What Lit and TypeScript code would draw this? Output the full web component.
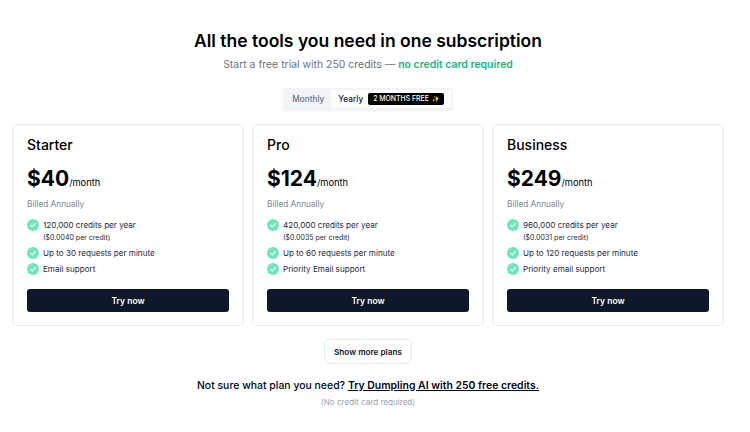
import { LitElement, html, css } from "lit";
import { customElement } from "lit/decorators.js";

const plans = [
  { name: "Starter", price: "$40", credits: "120,000 credits per year", per: "($0.0040 per credit)", rate: "Up to 30 requests per minute", support: "Email support" },
  { name: "Pro", price: "$124", credits: "420,000 credits per year", per: "($0.0035 per credit)", rate: "Up to 60 requests per minute", support: "Priority Email support" },
  { name: "Business", price: "$249", credits: "960,000 credits per year", per: "($0.0031 per credit)", rate: "Up to 120 requests per minute", support: "Priority email support" },
];

const check = html`<svg class="check" viewBox="0 0 20 20" width="12" height="12"><circle cx="10" cy="10" r="10" fill="#6ee7b7"/><path d="M5.8 10.4l2.9 2.8 5.5-5.9" fill="none" stroke="#fff" stroke-width="2" stroke-linecap="round" stroke-linejoin="round"/></svg>`;

@customElement("app-root")
export class AppRoot extends LitElement {
  static styles = css`
    :host { display: block; width: 750px; height: 432px; overflow: hidden; background: #fff; font-family: Inter, "Liberation Sans", sans-serif; color: #000; }
    .page { display: flex; flex-direction: column; align-items: center; padding: 29px 12px 0 12px; box-sizing: border-box; width: 736px; }
    h1 { margin: 0; font-size: 17.5px; line-height: 24px; font-weight: 600; }
    .sub { margin: 4px 0 0; font-size: 10.45px; line-height: 16px; color: #6b7280; }
    .sub b { color: #10b981; font-weight: 600; }
    .toggle { margin-top: 15px; display: flex; align-items: stretch; height: 22px; padding: 2px; border-radius: 3px; background: #f1f5f9; box-sizing: border-box; box-shadow: 0 1px 2px rgba(15,23,42,.06); }
    .tab { display: flex; align-items: center; font-size: 8.25px; font-weight: 500; }
    .monthly { color: #64748b; padding: 0 7px; }
    .yearly { background: #fff; border-radius: 2px; padding: 0 7px; gap: 5px; color: #0f172a; }
    .badge { background: #000; color: #fff; font-size: 6.9px; font-weight: 500; height: 12px; line-height: 12px; padding: 0 5px; border-radius: 2px; display: flex; align-items: center; gap: 3px; white-space: nowrap; }
    .spark { font-size: 6px; }
    .grid { margin-top: 14px; display: grid; grid-template-columns: repeat(3, 1fr); gap: 8px; align-self: stretch; box-sizing: border-box; width: 712px; }
    .card { border: 1px solid #e8edf4; border-radius: 5px; padding: 10px 14px 13px; box-sizing: border-box; height: 202px; display: flex; flex-direction: column; background: #fff; }
    .name { font-size: 14px; line-height: 20px; font-weight: 500; }
    .price { margin-top: 10px; display: flex; align-items: baseline; height: 28px; }
    .amount { font-size: 21px; line-height: 28px; font-weight: 700; }
    .unit { font-size: 9.3px; }
    .billed { margin-top: 5px; font-size: 8.25px; line-height: 12px; color: #7c8798; }
    ul { list-style: none; margin: 9px 0 0; padding: 0; display: flex; flex-direction: column; gap: 4px; }
    li { display: flex; gap: 4px; font-size: 8.1px; line-height: 12px; color: #1e293b; }
    .check { flex: none; }
    .per { display: block; font-size: 7px; line-height: 11px; margin-top: 1px; }
    .try { margin-top: auto; height: 23px; border: 0; border-radius: 3px; background: #0f172a; color: #fff; font: 600 8.5px Inter, sans-serif; }
    .more { margin-top: 13px; width: 88px; height: 25px; border: 1px solid #e8edf4; border-radius: 4px; background: #fff; font: 600 8.2px Inter, sans-serif; color: #0f172a; padding: 0; }
    .note { margin: 14px 0 0; font-size: 10.45px; line-height: 16px; font-weight: 500; color: #020617; }
    .note a { color: inherit; font-weight: 600; text-decoration: underline; }
    .small { margin: 2px 0 0; font-size: 8.1px; line-height: 12px; color: #94a3b8; }
  `;

  render() {
    return html`<div class="page">
      <h1>All the tools you need in one subscription</h1>
      <p class="sub">Start a free trial with 250 credits — <b>no credit card required</b></p>
      <div class="toggle">
        <div class="tab monthly">Monthly</div>
        <div class="tab yearly">Yearly <span class="badge">2 MONTHS FREE <span class="spark">✨</span></span></div>
      </div>
      <div class="grid">
        ${plans.map((p) => html`<section class="card">
          <div class="name">${p.name}</div>
          <div class="price"><span class="amount">${p.price}</span><span class="unit">/month</span></div>
          <div class="billed">Billed Annually</div>
          <ul>
            <li>${check}<span>${p.credits}<span class="per">${p.per}</span></span></li>
            <li>${check}<span>${p.rate}</span></li>
            <li>${check}<span>${p.support}</span></li>
          </ul>
          <button class="try">Try now</button>
        </section>`)}
      </div>
      <button class="more">Show more plans</button>
      <p class="note">Not sure what plan you need? <a>Try Dumpling AI with 250 free credits.</a></p>
      <p class="small">(No credit card required)</p>
    </div>`;
  }
}
